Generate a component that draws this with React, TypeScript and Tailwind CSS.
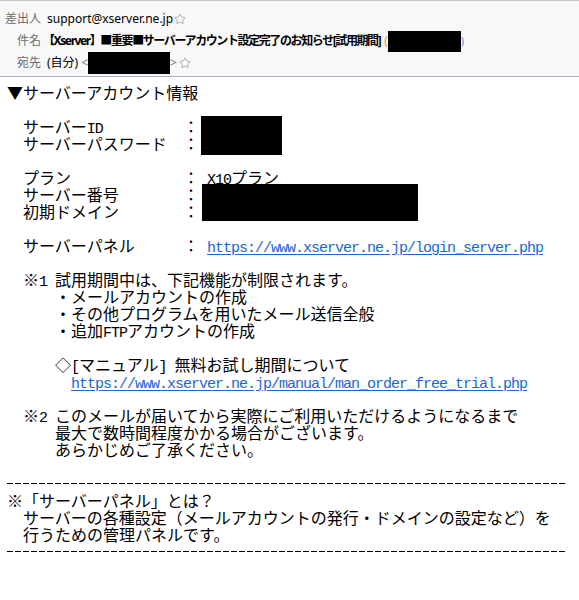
import { Star } from "lucide-react"
import type { ReactNode } from "react"

// half-width (hankaku) run, ~8px per character like the mail font
function H({ children }: { children: ReactNode }) {
  return (
    <span className="font-[family-name:'Liberation_Mono',monospace] text-[15px] tracking-[-1px]">
      {children}
    </span>
  )
}

function L({ children, className = "" }: { children?: ReactNode; className?: string }) {
  return <div className={`h-[17px] whitespace-pre ${className}`}>{children}</div>
}

function Dashes() {
  return (
    <div className="flex h-[17px] items-center">
      <div className="h-px w-[560px] bg-[image:repeating-linear-gradient(90deg,#000_0_6px,transparent_6px_8px)]" />
    </div>
  )
}

function Link({ href }: { href: string }) {
  return (
    <span className="text-[#1b66d9] underline underline-offset-[2px]">
      <H>{href}</H>
    </span>
  )
}

function Header() {
  return (
    <div className="flex flex-col border-t border-b border-t-[#c6c6c6] border-b-[#a7b3c3] bg-[#f8f8f8] pt-[7px] pb-[2px] text-[12px] font-[family-name:'Noto_Sans','Noto_Sans_CJK_JP',sans-serif]">
      <div className="flex h-[22px] items-center">
        <span className="w-[41px] text-right text-[#6b6b6b]">差出人</span>
        <span className="ml-[6px] text-black">support@xserver.ne.jp</span>
        <Star size={12} strokeWidth={1.4} className="ml-[1px] text-[#8c8c8c]" />
      </div>
      <div className="flex h-[22px] items-center">
        <span className="w-[41px] text-right text-[#6b6b6b]">件名</span>
        <span className="ml-[2px] font-bold tracking-[-1.4px] text-black">
          【Xserver】■重要■サーバーアカウント設定完了のお知らせ[試用期間]
        </span>
        <span className="ml-[4px] text-[#d89a2a]">(</span>
        <div className="h-[21px] w-[73px] self-end bg-black" />
        <span className="text-[10px] text-[#3a8ad8]">)</span>
      </div>
      <div className="flex h-[22px] items-center">
        <span className="w-[41px] text-right text-[#6b6b6b]">宛先</span>
        <span className="ml-[6px] text-black">(自分)</span>
        <span className="ml-[3px] text-[#777]">&lt;</span>
        <div className="h-[22px] w-[82px] bg-black" />
        <span className="text-[#777]">&gt;</span>
        <Star size={12} strokeWidth={1.4} className="ml-[2px] text-[#8c8c8c]" />
      </div>
    </div>
  )
}

export default function App() {
  return (
    <div className="min-h-[600px] w-[579px] bg-white">
      <Header />
      <div className="pt-[7px] pl-[7px] text-[16px] leading-[17px] text-black font-[family-name:'Noto_Sans_CJK_JP',sans-serif]">
        <L>▼サーバーアカウント情報</L>
        <L />

        <div className="flex pl-4">
          <div className="w-[160px]">
            <L>
              サーバー<H>ID</H>
            </L>
            <L>サーバーパスワード</L>
          </div>
          <div className="w-4">
            <L>：</L>
            <L>：</L>
          </div>
          <div className="-mt-[2px] -mb-[3px] ml-[2px] h-[39px] w-[81px] bg-black" />
        </div>
        <L />

        <div className="flex pl-4">
          <div className="w-[160px]">
            <L>プラン</L>
            <L>サーバー番号</L>
            <L>初期ドメイン</L>
          </div>
          <div className="w-4">
            <L>：</L>
            <L>：</L>
            <L>：</L>
          </div>
          <div className="flex flex-col">
            <L className="pl-2">
              <H>X10</H>プラン
            </L>
            <div className="-mt-[2px] -mb-[1px] ml-[3px] h-[37px] w-[216px] bg-black" />
          </div>
        </div>
        <L />

        <div className="flex pl-4">
          <L className="w-[160px]">サーバーパネル</L>
          <L className="w-4">：</L>
          <L className="pl-2">
            <Link href="https://www.xserver.ne.jp/login_server.php" />
          </L>
        </div>
        <L />

        <L className="pl-4">
          ※<H>1 </H>試用期間中は、下記機能が制限されます。
        </L>
        <L className="pl-12">・メールアカウントの作成</L>
        <L className="pl-12">・その他プログラムを用いたメール送信全般</L>
        <L className="pl-12">
          ・追加<H>FTP</H>アカウントの作成
        </L>
        <L />
        <L className="pl-12">
          ◇<H>[</H>マニュアル<H>] </H>無料お試し期間について
        </L>
        <L className="pl-16">
          <Link href="https://www.xserver.ne.jp/manual/man_order_free_trial.php" />
        </L>
        <L />

        <L className="pl-4">
          ※<H>2 </H>このメールが届いてから実際にご利用いただけるようになるまで
        </L>
        <L className="pl-12">最大で数時間程度かかる場合がございます。</L>
        <L className="pl-12">あらかじめご了承ください。</L>
        <L />

        <Dashes />
        <L>※「サーバーパネル」とは？</L>
        <L className="pl-4">サーバーの各種設定（メールアカウントの発行・ドメインの設定など）を</L>
        <L className="pl-4">行うための管理パネルです。</L>
        <Dashes />
      </div>
    </div>
  )
}
